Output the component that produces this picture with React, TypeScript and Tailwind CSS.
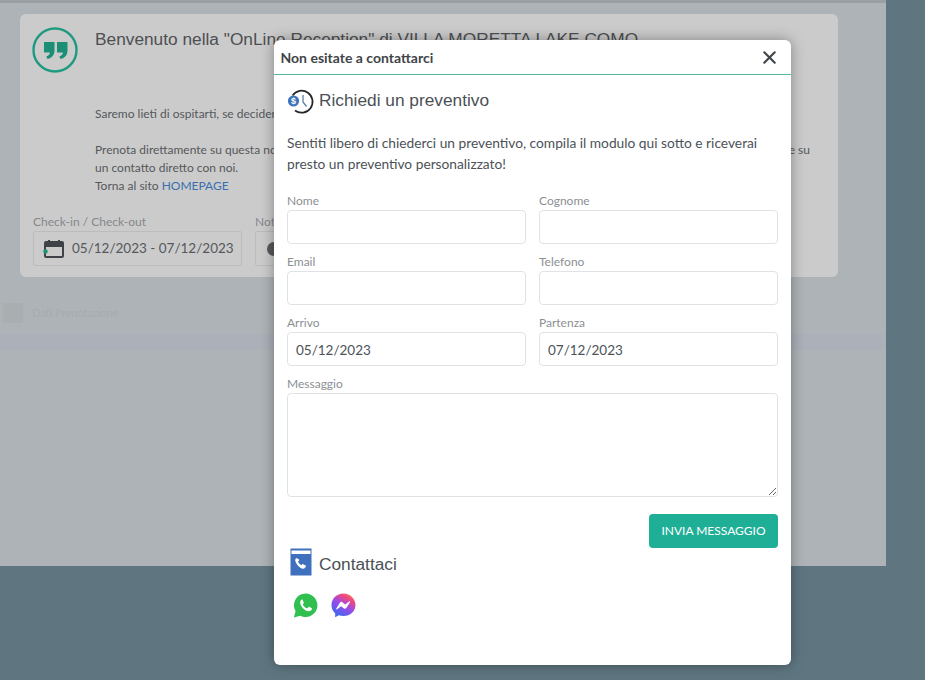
import { X } from "lucide-react"

const lato = "font-['Lato','Noto_Sans',sans-serif]"

function Field({ label, value }: { label: string; value?: string }) {
  return (
    <div className="flex h-[61px] flex-col">
      <label className="h-[17px] text-[12px] leading-[15px] text-[#8b8f94]">{label}</label>
      <input
        readOnly
        value={value ?? ""}
        className="h-[34px] w-full rounded-[4px] border border-[#dfe3e6] bg-white px-[8px] pt-[2px] text-[13.5px] text-[#4c5258] outline-none"
      />
    </div>
  )
}

function CalendarIcon() {
  return (
    <svg width="22" height="22" viewBox="0 0 22 22" className="shrink-0">
      <rect x="2" y="4" width="18" height="15" rx="1" fill="none" stroke="#3f4347" strokeWidth="2" />
      <rect x="2" y="4" width="18" height="5" fill="#3f4347" />
      <rect x="5" y="2" width="2" height="4" fill="#3f4347" />
      <rect x="15" y="2" width="2" height="4" fill="#3f4347" />
      <circle cx="2.500" cy="13.500" r="2.200" fill="#1a9077" />
    </svg>
  )
}

function QuoteBadge() {
  return (
    <svg width="46" height="46" viewBox="0 0 46 46" className="-ml-px shrink-0">
      <circle cx="23" cy="23" r="21.500" fill="none" stroke="#1f9a80" strokeWidth="2.400" />
      <path d="M12 15h10.500v8.500c0 4.500-2.500 7.500-7 8.500l-1.200-2.600c2.300-.7 3.400-2 3.600-3.900H12z" fill="#1a8f76" />
      <path d="M25 15h10.500v8.500c0 4.500-2.500 7.500-7 8.500l-1.200-2.600c2.300-.7 3.400-2 3.600-3.900H25z" fill="#1a8f76" />
    </svg>
  )
}

function QuoteClockIcon() {
  return (
    <svg width="28" height="28" viewBox="0 0 28 28" className="shrink-0">
      <path d="M5.500 8.500A11 11 0 1 1 8 23.500" fill="none" stroke="#23262b" strokeWidth="1.700" />
      <path d="M16 8v7l3.500 4.500" fill="none" stroke="#5a7fa8" strokeWidth="1.300" />
      <circle cx="6.500" cy="14" r="5.600" fill="#3f74bd" />
      <text x="6.500" y="17.200" textAnchor="middle" fontSize="9" fontWeight="700" fill="#fff" fontFamily="Liberation Sans">$</text>
    </svg>
  )
}

function PhoneBookIcon() {
  return (
    <svg width="22" height="28" viewBox="0 0 22 28" className="shrink-0">
      <rect x="0.500" y="0.500" width="21" height="27" fill="#3f70bd" />
      <rect x="1.500" y="2.500" width="19" height="3.500" fill="#fff" />
      <path
        d="M6 10.500c-.8.600-1 1.600-.6 2.800 1 3 3.400 5.800 6.400 7.200 1.200.5 2.300.3 3-.5l1-1.200c.3-.4.200-.9-.2-1.200l-2.300-1.400c-.4-.2-.8-.1-1.100.2l-.7.8c-1.500-.8-2.800-2.200-3.500-3.800l.9-.6c.4-.3.500-.7.300-1.100L7.500 10.600c-.3-.4-.9-.5-1.500-.1z"
        fill="#fff"
      />
    </svg>
  )
}

function WhatsappIcon() {
  return (
    <svg width="25" height="25" viewBox="0 0 25 25">
      <path d="M12.700.5a11.800 11.800 0 0 0-10.100 17.800L.8 24.500l6.400-1.700A11.800 11.800 0 1 0 12.700.5z" fill="#2fc04f" />
      <path
        d="M8.800 6.600c-.9.500-1.800 1.700-1.600 3.300.4 3.600 4.200 7.700 8 8.300 1.700.2 3-.6 3.500-1.600.3-.6.300-1.200.2-1.400l-2.700-1.400c-.3-.1-.5 0-.7.200l-1 1.200c-.2.200-.4.200-.7.100-1.700-.7-3-1.900-3.900-3.500-.1-.3-.1-.5.100-.7l.7-.9c.2-.2.200-.4.100-.6l-1.200-2.700c-.2-.3-.6-.4-.8-.3z"
        fill="#fff"
      />
    </svg>
  )
}

function MessengerIcon() {
  return (
    <svg width="25" height="25" viewBox="0 0 25 25">
      <defs>
        <linearGradient id="msgr" x1="0.2" y1="1" x2="0.8" y2="0">
          <stop offset="0" stopColor="#2f6df0" />
          <stop offset="0.5" stopColor="#9a4be8" />
          <stop offset="0.8" stopColor="#f0487f" />
          <stop offset="1" stopColor="#fb7a5a" />
        </linearGradient>
      </defs>
      <path d="M12.500.5C5.700.5.500 5.500.500 12c0 3.400 1.400 6.300 3.700 8.300v4l3.600-2c1.400.5 3 .8 4.700.8 6.800 0 12-5 12-11.100S19.300.5 12.500.5z" fill="url(#msgr)" />
      <path d="M5.300 15.400l3.700-5.800c.5-.8 1.500-1 2.300-.4l2.900 2.200 4-3c.5-.4 1.200.2.800.8l-3.700 5.800c-.5.800-1.500 1-2.300.4L10.100 13.300l-4 3c-.5.400-1.200-.3-.8-.9z" fill="#fff" />
    </svg>
  )
}

function BackgroundPage() {
  return (
    <div className="h-[566px] w-[886px] border-t-[3px] border-[#98a0a4] bg-[#aeb3b7]">
      <div className={`ml-[20px] mt-[11px] h-[263px] w-[818px] rounded-[6px] bg-[#cbcbcb] pl-[13px] pt-[13px] text-[#55585b] ${lato}`}>
        <div className="flex gap-[17px]">
          <QuoteBadge />
          <div className="min-w-0 flex-1 pr-[28px]">
            <h1 className="mt-[1px] whitespace-nowrap font-['Liberation_Sans',sans-serif] text-[17.3px] leading-[22px] text-[#4d4f52]">
              Benvenuto nella "OnLine Reception" di VILLA MORETTA LAKE COMO
            </h1>
            <p className="mt-[55px] text-[12px] leading-[18px]">Saremo lieti di ospitarti, se deciderai di soggiornare da noi.</p>
            <div className="mt-[18px] text-[12px] leading-[18px]">
              <div className="flex justify-between">
                <span>Prenota direttamente su questa nostra pagina ufficiale</span>
                <span>e su</span>
              </div>
              un contatto diretto con noi.
              <br />
              Torna al sito <span className="text-[#3a6fb0]">HOMEPAGE</span>
            </div>
          </div>
        </div>
        <div className="mt-[18px] flex gap-[13px]">
          <div>
            <div className="h-[18px] text-[12px] leading-[18px] text-[#85888b]">Check-in / Check-out</div>
            <div className="flex h-[35px] w-[209px] items-center gap-[7px] whitespace-nowrap rounded-[2px] border border-[#bcbcbc] pl-[9px] text-[13.500px]">
              <CalendarIcon />
              05/12/2023 - 07/12/2023
            </div>
          </div>
          <div>
            <div className="h-[18px] text-[12px] leading-[18px] text-[#85888b]">Notti</div>
            <div className="flex h-[35px] w-[100px] items-center rounded-[2px] border border-[#bcbcbc] pl-[11px]">
              <span className="h-[14px] w-[14px] rounded-full bg-[#55585b]" />
            </div>
          </div>
        </div>
      </div>
      <div className={`mt-[26px] flex items-center gap-[9px] pl-[3px] text-[11px] text-[#a6acaf] ${lato}`}>
        <span className="h-[20px] w-[20px] bg-[#a9aeb1]" />
        Dati Prenotazione
      </div>
      <div className="mt-[11px] h-[16px] w-full bg-[#abb0b9]" />
    </div>
  )
}

export default function App() {
  return (
    <div className="relative h-[680px] w-[925px] overflow-hidden bg-[#5f7680]">
      <BackgroundPage />

      {/* modal sits over the dimmed page */}
      <div className={`absolute left-[274px] top-[40px] h-[625px] w-[517px] rounded-[6px] bg-white text-[#4c5258] shadow-[0_0_14px_rgba(0,0,0,0.35)] ${lato}`}>
        <div className="flex h-[35px] items-center justify-between border-b-[1.500px] border-[#58b9a3] pl-[6.500px] pr-[11px]">
          <h2 className="text-[14px] font-bold text-[#3f4448]">Non esitate a contattarci</h2>
          <X size={21} strokeWidth={2.400} className="text-[#3f4448]" />
        </div>

        <div className="px-[13px]">
          <div className="mt-[11px] flex h-[30px] items-center gap-[4px]">
            <QuoteClockIcon />
            <span className="font-['Liberation_Sans',sans-serif] text-[17.300px] text-[#4c5056]">Richiedi un preventivo</span>
          </div>

          <p className="mt-[16px] h-[42px] text-[13.750px] leading-[21px] text-[#4c5258]">
            Sentiti libero di chiederci un preventivo, compila il modulo qui sotto e riceverai presto un preventivo personalizzato!
          </p>

          <div className="mt-[19px] grid grid-cols-2 gap-x-[13px]">
            <Field label="Nome" />
            <Field label="Cognome" />
            <Field label="Email" />
            <Field label="Telefono" />
            <Field label="Arrivo" value="05/12/2023" />
            <Field label="Partenza" value="07/12/2023" />
          </div>

          <label className="block h-[17px] text-[12px] leading-[15px] text-[#8b8f94]">Messaggio</label>
          <textarea readOnly className="block h-[104px] w-full rounded-[4px] border border-[#dfe3e6] bg-white outline-none" />

          <div className="mt-[17px] flex justify-end">
            <button className="h-[34px] w-[129px] rounded-[4px] bg-[#1fae96] text-[12px] text-white">INVIA MESSAGGIO</button>
          </div>

          <div className="flex h-[28px] items-center gap-[7px] pl-[3px]">
            <PhoneBookIcon />
            <span className="pt-[6px] font-['Liberation_Sans',sans-serif] text-[17.300px] text-[#4c5056]">Contattaci</span>
          </div>

          <div className="mt-[17px] flex gap-[13px] pl-[6px]">
            <WhatsappIcon />
            <MessengerIcon />
          </div>
        </div>
      </div>
    </div>
  )
}
